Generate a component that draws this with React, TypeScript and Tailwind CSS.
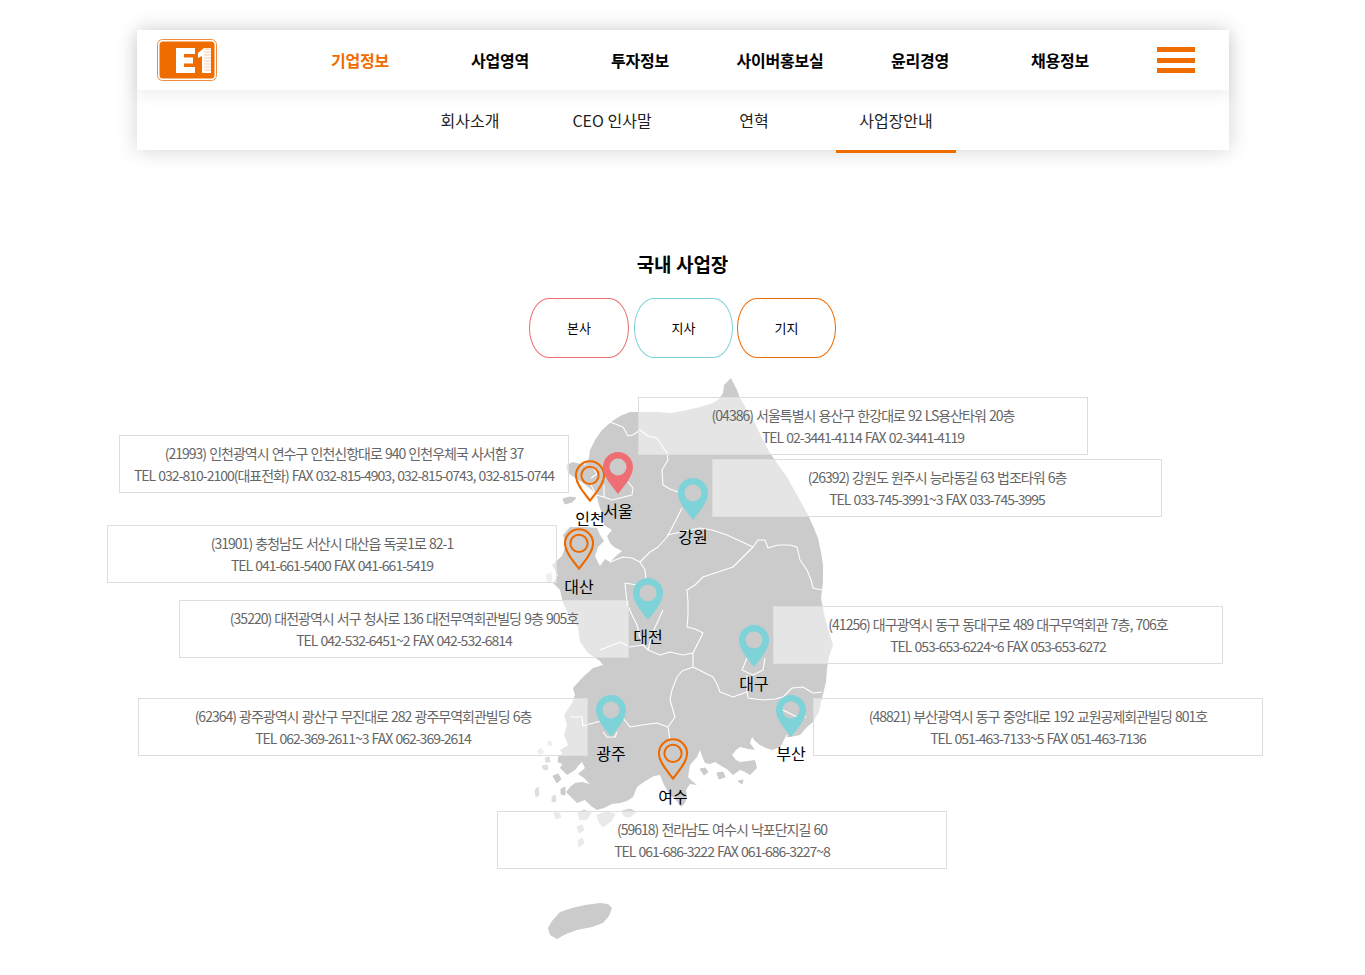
import React from "react";

const font = { fontFamily: '"Noto Sans CJK KR", "Noto Sans", sans-serif' };

const mainMenu = ["기업정보", "사업영역", "투자정보", "사이버홍보실", "윤리경영", "채용정보"];
const subMenu = ["회사소개", "CEO 인사말", "연혁", "사업장안내"];

const boxes = [
  { x: 638, y: 397, a: "(04386) 서울특별시 용산구 한강대로 92 LS용산타워 20층", b: "TEL 02-3441-4114 FAX 02-3441-4119" },
  { x: 712, y: 459, a: "(26392) 강원도 원주시 능라동길 63 법조타워 6층", b: "TEL 033-745-3991~3 FAX 033-745-3995" },
  { x: 119, y: 435, a: "(21993) 인천광역시 연수구 인천신항대로 940 인천우체국 사서함 37", b: "TEL 032-810-2100(대표전화) FAX 032-815-4903, 032-815-0743, 032-815-0744" },
  { x: 107, y: 525, a: "(31901) 충청남도 서산시 대산읍 독곶1로 82-1", b: "TEL 041-661-5400 FAX 041-661-5419" },
  { x: 179, y: 600, a: "(35220) 대전광역시 서구 청사로 136 대전무역회관빌딩 9층 905호", b: "TEL 042-532-6451~2 FAX 042-532-6814" },
  { x: 773, y: 606, a: "(41256) 대구광역시 동구 동대구로 489 대구무역회관 7층, 706호", b: "TEL 053-653-6224~6 FAX 053-653-6272" },
  { x: 138, y: 698, a: "(62364) 광주광역시 광산구 무진대로 282 광주무역회관빌딩 6층", b: "TEL 062-369-2611~3 FAX 062-369-2614" },
  { x: 813, y: 698, a: "(48821) 부산광역시 동구 중앙대로 192 교원공제회관빌딩 801호", b: "TEL 051-463-7133~5 FAX 051-463-7136" },
  { x: 497, y: 811, a: "(59618) 전라남도 여수시 낙포단지길 60", b: "TEL 061-686-3222 FAX 061-686-3227~8" },
];

const pins = [
  { name: "인천", x: 575, y: 460, kind: "base" },
  { name: "서울", x: 603, y: 452, kind: "head" },
  { name: "강원", x: 678, y: 478, kind: "branch" },
  { name: "대산", x: 564, y: 528, kind: "base" },
  { name: "대전", x: 633, y: 578, kind: "branch" },
  { name: "대구", x: 739, y: 625, kind: "branch" },
  { name: "광주", x: 596, y: 695, kind: "branch" },
  { name: "부산", x: 776, y: 695, kind: "branch" },
  { name: "여수", x: 658, y: 738, kind: "base" },
];

function Pin({ kind }: { kind: string }) {
  const outer = "M15 0C6.7 0 0 6.7 0 15C0 25 10 35 15 42C20 35 30 25 30 15C30 6.7 23.3 0 15 0Z";
  const hole = "M15 6.5a8.5 8.5 0 1 0 0 17a8.5 8.5 0 1 0 0-17Z";
  if (kind === "base") {
    return (
      <svg width="30" height="42" viewBox="-1 -1 32 44" className="block">
        <path d={outer} fill="none" stroke="#ec6a00" strokeWidth="2.2" />
        <circle cx="15" cy="15" r="9.2" fill="none" stroke="#ec6a00" strokeWidth="2.1" />
      </svg>
    );
  }
  return (
    <svg width="30" height="42" viewBox="0 0 30 42" className="block">
      <path d={outer + hole} fillRule="evenodd" fill={kind === "head" ? "#ee6e73" : "#7dd3d8"} />
    </svg>
  );
}

function Logo() {
  return (
    <svg width="60" height="42" viewBox="0 0 60 42" className="block">
      <rect x="0.5" y="0.5" width="59" height="41" rx="5" fill="#fff" stroke="#f08a3c" />
      <rect x="2.5" y="2.5" width="55" height="37" rx="3.5" fill="#ef6c00" />
      <path d="M19 9H38V15H27V18.5H36V24.5H27V28H38V34H19Z" fill="#fff" />
      <path d="M41 14L47 9H54V34H45V17L41 19Z" fill="#fff" />
      <path d="M47 10H54M47 13H54M47 16H54M47 19H54M47 22H54M47 25H54M47 28H54M47 31H54" stroke="#f9bd8c" strokeWidth="0.8" />
    </svg>
  );
}

function KoreaMap() {
  return (
    <svg width="1365" height="975" viewBox="0 0 1365 975" className="block">
      {/* mainland, clockwise from the north-east tip */}
      <path
        fill="#cbcbcb"
        d="M731 378L737 390L740 398L747 410L754 421L762 438L770 453L779 466L787 477L797 495L807 513L813 526L818 538L821 552L823 565L823 582L821 598L825 618L829 632L833 645L829 657L827 668L826 682L822 698L819 712L813 722L807 727L800 735L790 737L787 737L780 747L772 750L766 748L760 745L755 741L752 737L750 743L755 750L748 749L740 747L736 750L732 755L736 760L740 762L748 761L755 760L757 768L750 775L745 772L740 770L733 775L728 770L723 767L715 762L710 764L705 763L702 756L700 750L697 757L690 765L689 771L688 777L692 781L697 785L690 784L686 790L687 797L685 803L681 807L676 800L670 795L664 785L660 775L654 776L647 780L641 784L637 787L635 792L633 797L627 801L620 803L612 804L604 808L597 810L591 806L585 800L577 803L572 798L566 792L570 787L575 783L582 782L590 784L584 778L578 774L585 768L582 762L578 766L575 770L567 775L560 768L566 758L560 750L568 745L564 735L567 725L564 715L572 703L575 695L573 688L583 677L593 668L603 665L600 661L588 653L580 642L578 627L570 617L563 603L560 590L553 583L558 575L552 565L562 556L566 545L563 535L570 527L585 527L597 528L600 535L604 541L598 547L595 556L600 566L605 559L610 562L616 556L622 551L614 547L610 543L607 536L612 530L604 525L602 514L599 505L597 497L592 490L583 483L577 479L568 473L566 465L573 462L585 465L589 458L590 450L595 440L602 430L611 422L620 416L630 412L645 412L657 412L672 413L687 410L700 407L713 403L719 399L723 393L724 385Z"
      />
      {/* Jeju */}
      <path
        fill="#cbcbcb"
        d="M548 928L552 921L560 912L572 908L585 905L600 903L608 904L612 908L609 916L603 923L592 927L577 930L566 934L557 939L550 935Z"
      />
      {/* islands */}
      <g fill="#cbcbcb" stroke="#cbcbcb" strokeWidth="1" strokeLinejoin="round">
        <path d="M563 499L570 497L576 498L572 502L565 504Z" />
        <path d="M559 756L564 753L568 760L564 764L558 762Z" />
        <path d="M553 776L558 774L561 779L557 783Z" />
        <path d="M561 789L565 787L565 795L561 794Z" />
        <path d="M700 769L705 768L708 772L704 775Z" />
        <path d="M717 773L723 772L725 777L719 779Z" />
        <path d="M738 781L743 780L742 784Z" />
      </g>
      <g fill="#dedede" stroke="#dedede" strokeWidth="1" strokeLinejoin="round">
        <path d="M546 575L551 573L552 580L548 583Z" />
        <path d="M537 751L541 748L544 752L540 755Z" />
        <path d="M548 741L552 742L551 746L548 745Z" />
        <path d="M542 766L547 765L548 769L544 770Z" />
        <path d="M535 790L538 787L539 795L536 797Z" />
        <path d="M552 797L555 795L556 801L552 802Z" />
        <path d="M545 758L549 757L550 762L546 762Z" />
      </g>
      <g fill="#d2d2d2" stroke="#d2d2d2" strokeWidth="1" strokeLinejoin="round">
        <path d="M578 813L584 810L591 813L587 819L580 820Z" />
        <path d="M597 815L606 812L615 814L611 821L603 827L599 822Z" />
        <path d="M622 811L630 809L636 812L630 817L624 816Z" />
        <path d="M577 827L582 825L584 830L579 833Z" />
        <path d="M578 841L582 838L584 843L579 847Z" />
        <path d="M554 813L559 813L561 817L556 819Z" />
      </g>
      {/* provincial borders */}
      <g fill="none" stroke="#ffffff" strokeWidth="1.1" strokeLinejoin="round">
        <path d="M610 422L623 427L628 436L633 435L640 430L648 436L657 438L662 446L667 453L668 460L662 470L663 485L670 489L678 492" />
        <path d="M682 508L675 522L667 537L658 547L650 552L640 562L632 558L623 557L610 562" />
        <path d="M640 562L645 570L646 580" />
        <path d="M667 535L685 531L700 528L712 530L727 535L740 541L753 547L758 540L765 540L768 548L778 545L790 545L797 547L800 560L807 570L811 580L813 588L822 590" />
        <path d="M753 547L745 555L737 563L733 567L718 572L703 577L695 585L687 590L688 603L688 615L687 627L695 629L703 633L697 645L693 653L693 667" />
        <path d="M693 653L683 655L670 652L660 655L648 650L643 645L630 647L620 642L610 646L600 650" />
        <path d="M625 583L637 585M625 583L627 603L632 615L637 625L640 637L643 645" />
        <path d="M663 610L657 623L652 634L648 650" />
        <path d="M693 667L682 671L677 677L672 690L670 700L675 717L668 727L670 740" />
        <path d="M693 667L703 672L713 677L717 684L720 692L733 697L747 692L748 698L763 700L775 699L783 697L788 692L792 688L803 687L813 693L822 692" />
        <path d="M765 658L763 670L753 675L742 670L747 658" />
        <path d="M747 675L747 692" />
        <path d="M570 717L582 717L583 726L597 722L610 720L623 718L630 727L642 725L657 723L668 727" />
        <path d="M603 732L607 737L615 737L617 732" />
        <path d="M787 735L783 743M783 710L797 717L806 717" />
        <path d="M604 485L604 497L612 500L632 495L633 488L628 482" />
        <path d="M590 483L596 495L604 497" />
        <path d="M592 466L597 474L591 478" />
      </g>
    </svg>
  );
}

export default function App() {
  return (
    <div className="relative w-[1365px] h-[975px] overflow-hidden bg-white" style={font}>
      <header className="absolute left-[137px] top-[30px] w-[1092px] bg-white shadow-[0_0_20px_rgba(0,0,0,0.18)]">
        <div className="relative z-10 flex h-[60px] items-center bg-white pl-[20px] shadow-[0_5px_15px_rgba(0,0,0,0.07)]">
          <Logo />
          <nav className="ml-[73px] flex">
            {mainMenu.map((m, i) => (
              <a key={m} className={"block w-[140px] text-center text-[16px] font-bold tracking-[-0.2px] " + (i === 0 ? "text-[#ef6c00]" : "text-black")}>
                {m}
              </a>
            ))}
          </nav>
          <div className="ml-[27px] flex h-[26px] w-[38px] flex-col justify-between">
            <span className="block h-[5px] bg-[#ef6c00]" />
            <span className="block h-[5px] bg-[#ef6c00]" />
            <span className="block h-[5px] bg-[#ef6c00]" />
          </div>
        </div>
        <div className="flex h-[60px] justify-start gap-[22px] pl-[273px]">
          {subMenu.map((m, i) => (
            <a key={m} className={"flex w-[120px] items-center justify-center text-[16px] text-[#222] " + (i === 3 ? "h-[63px] border-b-[3px] border-[#ef6c00]" : "")}>
              {m}
            </a>
          ))}
        </div>
      </header>

      <h2 className="absolute left-0 top-[249px] w-full text-center text-[19px] font-bold leading-[30px] text-black">국내 사업장</h2>

      <div className="absolute left-[529px] top-[298px] flex gap-[4px]">
        <button className="mr-[1px] h-[60px] w-[100px] rounded-[20px/30px] border border-[#ee6e73] text-[13px] text-black">본사</button>
        <button className="h-[60px] w-[99px] rounded-[20px/30px] border border-[#7dd3d8] text-[13px] text-black">지사</button>
        <button className="h-[60px] w-[99px] rounded-[20px/30px] border border-[#ec6a00] text-[13px] text-black">기지</button>
      </div>

      <div className="absolute left-0 top-0">
        <KoreaMap />
      </div>

      {boxes.map((b) => (
        <div
          key={b.x}
          className="absolute flex h-[58px] w-[450px] flex-col items-center justify-center border border-[#ddd] bg-white/50 text-[14px] leading-[22px] tracking-[-1px] [word-spacing:1px] text-[#666]"
          style={{ left: b.x, top: b.y }}
        >
          <p>{b.a}</p>
          <p>{b.b}</p>
        </div>
      ))}

      {pins.map((p) => (
        <div key={p.name} className="absolute flex w-[30px] flex-col items-center" style={{ left: p.x, top: p.y }}>
          <Pin kind={p.kind} />
          <span className="mt-[5px] whitespace-nowrap text-[16px] leading-[22px] text-black">{p.name}</span>
        </div>
      ))}
    </div>
  );
}
